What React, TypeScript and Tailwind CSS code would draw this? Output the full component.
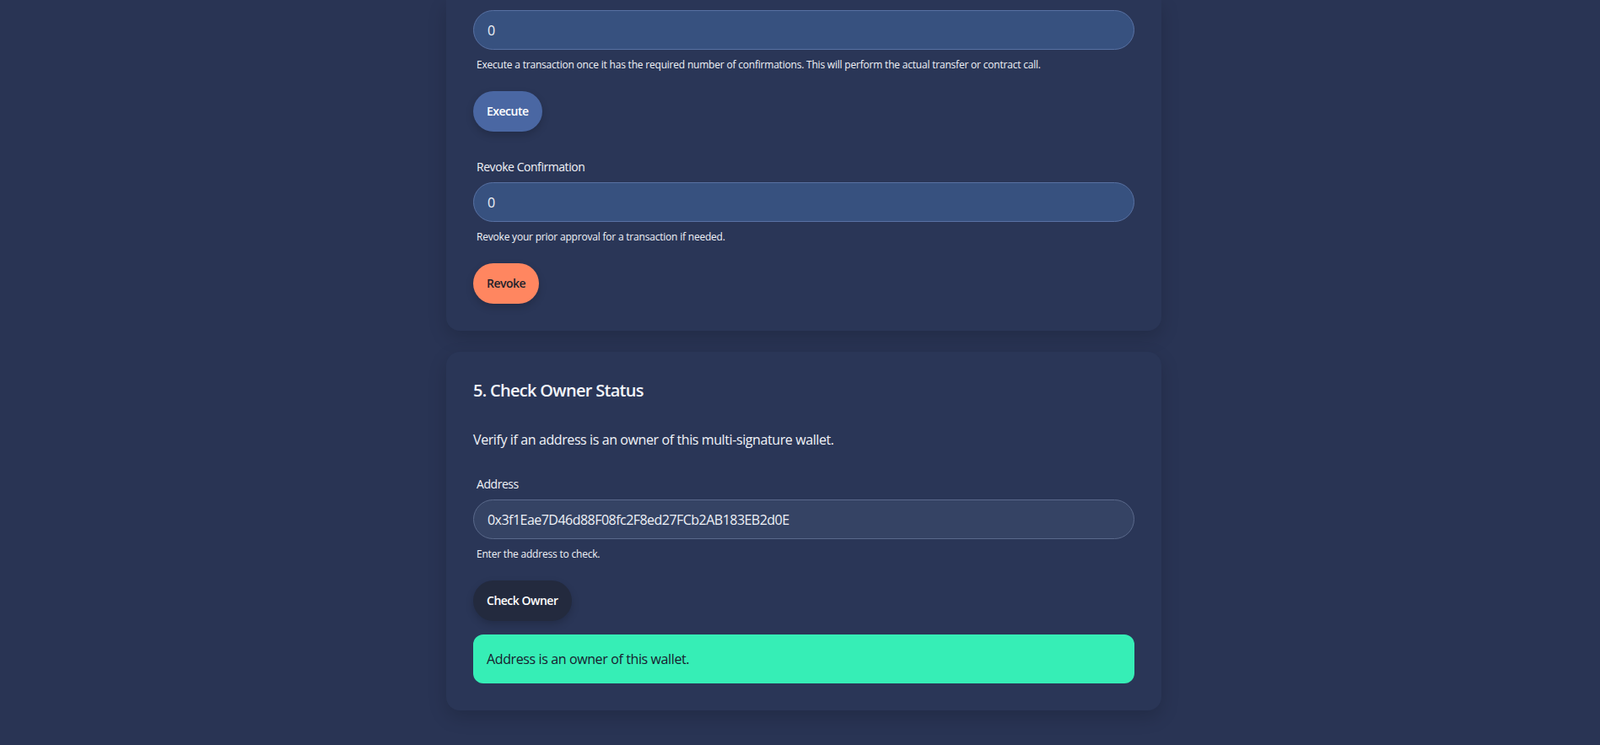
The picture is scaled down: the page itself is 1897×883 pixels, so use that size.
import { useState } from 'react'

const FONT_CLASS_NAME = "font-['Segoe_UI','Open_Sans',sans-serif]"

const HELPER_CLASS_NAME = 'mt-[10px] px-1 text-xs leading-4 tracking-[-0.017em] text-[#f1f3f8]'
const LABEL_CLASS_NAME = 'px-1 text-sm leading-5 tracking-[-0.032em] text-[#f1f3f8]'
const BUTTON_BASE_CLASS_NAME =
  'mt-[23px] inline-flex h-12 items-center rounded-full px-4 text-sm font-semibold tracking-[-0.035em] shadow-[0_4px_10px_rgba(0,0,0,0.18)]'

function FieldInput({
  value,
  onChange,
  tone,
}: {
  value: string
  onChange: (value: string) => void
  tone: 'blue' | 'slate'
}) {
  const toneClassName =
    tone === 'blue'
      ? 'border-[#5871a3] bg-[#37517f]'
      : 'border-[#5a698b] bg-[#354364]'

  return (
    <input
      value={value}
      onChange={(event) => onChange(event.target.value)}
      className={`block h-[47px] w-full rounded-full border px-4 text-base tracking-[-0.033em] text-[#eef1f7] outline-none ${toneClassName}`}
    />
  )
}

function App() {
  const [executeIndex, setExecuteIndex] = useState('0')
  const [revokeIndex, setRevokeIndex] = useState('0')
  const [ownerAddress, setOwnerAddress] = useState('0x3f1Eae7D46d88F08fc2F8ed27FCb2AB183EB2d0E')

  return (
    <div className={`min-h-screen bg-[#293454] pl-[9px] ${FONT_CLASS_NAME}`}>
      <div className="mx-auto w-[848px] pb-[41px]">
        {/* transaction actions card, scrolled past its header */}
        <section className="rounded-b-2xl bg-[#2a3657] px-8 pb-8 pt-3 shadow-[0_8px_22px_rgba(0,0,0,0.16)]">
          <FieldInput value={executeIndex} onChange={setExecuteIndex} tone="blue" />
          <p className={HELPER_CLASS_NAME}>
            Execute a transaction once it has the required number of confirmations. This will perform the actual transfer or contract call.
          </p>
          <button type="button" className={`${BUTTON_BASE_CLASS_NAME} bg-[#4a67a3] text-white`}>
            Execute
          </button>

          <p className={`mt-8 ${LABEL_CLASS_NAME}`}>Revoke Confirmation</p>
          <div className="mt-2">
            <FieldInput value={revokeIndex} onChange={setRevokeIndex} tone="blue" />
          </div>
          <p className={HELPER_CLASS_NAME}>Revoke your prior approval for a transaction if needed.</p>
          <button type="button" className={`${BUTTON_BASE_CLASS_NAME} bg-[#ff8660] text-[#1c1f2b]`}>
            Revoke
          </button>
        </section>

        <section className="mt-[25px] rounded-2xl bg-[#2a3657] px-8 pb-8 pt-8 shadow-[0_8px_22px_rgba(0,0,0,0.16)]">
          <h3 className="text-xl font-semibold leading-7 tracking-[-0.035em] text-[#f3f5fa]">5. Check Owner Status</h3>
          <p className="mt-8 text-base leading-6 tracking-[-0.025em] text-[#f1f3f8]">
            Verify if an address is an owner of this multi-signature wallet.
          </p>

          <p className={`mt-[31px] ${LABEL_CLASS_NAME}`}>Address</p>
          <div className="mt-2">
            <FieldInput value={ownerAddress} onChange={setOwnerAddress} tone="slate" />
          </div>
          <p className={HELPER_CLASS_NAME}>Enter the address to check.</p>
          <button type="button" className={`${BUTTON_BASE_CLASS_NAME} bg-[#232a3e] text-white`}>
            Check Owner
          </button>

          <div className="mt-4 flex h-[58px] items-center rounded-xl bg-[#36eeb6] px-4 text-base tracking-[-0.024em] text-[#17202e]">
            Address is an owner of this wallet.
          </div>
        </section>
      </div>
    </div>
  )
}

export default App
